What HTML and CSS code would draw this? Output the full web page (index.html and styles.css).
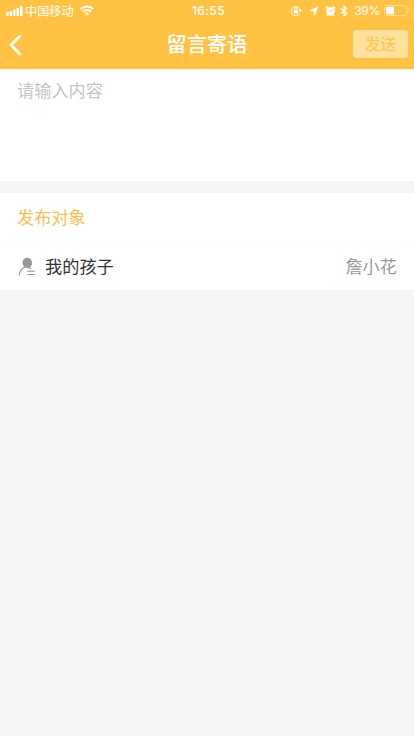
FILE: index.html
```html
<!DOCTYPE html>
<html lang="zh-CN">
<head>
<meta charset="utf-8">
<title>留言寄语</title>
<link rel="stylesheet" href="styles.css">
</head>
<body>
<header class="header">
  <div class="status">
    <div class="status-left">
      <svg class="signal" width="17" height="10" viewBox="0 0 17 10" fill="#fff"><rect x="0" y="6" width="2.6" height="4" rx=".8"/><rect x="3.5" y="5" width="2.6" height="5" rx=".8"/><rect x="7" y="3.6" width="2.6" height="6.4" rx=".8"/><rect x="10.5" y="2" width="2.6" height="8" rx=".8"/><rect x="14" y="0" width="2.6" height="10" rx=".8"/></svg>
      <span class="carrier">中国移动</span>
      <svg class="wifi" width="14" height="11" viewBox="0 0 14 11" fill="none" stroke="#fff" stroke-width="2"><path d="M.7 4.1C4.2.7 9.8.7 13.300 4.100"/><path d="M3 6.600C5.200 4.500 8.800 4.500 11 6.600"/><path d="M4.900 8.400C6.100 7.300 7.900 7.300 9.100 8.400L7 10.600Z" fill="#fff" stroke="none"/></svg>
    </div>
    <span class="time">16:55</span>
    <div class="status-right">
      <svg width="12" height="12" viewBox="0 0 12 12" fill="none" stroke="#fff"><path d="M9.700 8.700A4.600 4.600 0 1 1 10.400 5.500"/><path d="M8.700 5.200h3.300l-1.600 2.200z" fill="#fff" stroke="none"/><path d="M4.500 5.500V4.300a1.400 1.400 0 0 1 2.800 0v1.200" stroke-width=".9"/><rect x="3.700" y="5.300" width="4.400" height="3.300" rx=".4" fill="#fff" stroke="none"/></svg>
      <svg class="location" width="10" height="10" viewBox="0 0 10 10" fill="none" stroke="#fff" stroke-linejoin="round"><path d="M9 1 5.600 9 5 5 1 4.600Z" fill="#fff" stroke-width=".6"/></svg>
      <svg class="alarm" width="11" height="12" viewBox="0 0 11 12"><circle cx="5.500" cy="6.400" r="4.300" fill="#fff"/><path d="M1.100 3 2.700 1.700M9.900 3 8.300 1.700M2.800 9.800l-.6.900M8.200 9.800l.6.900" stroke="#fff" stroke-width="1.300" stroke-linecap="round"/><path d="M7.400 4.500 5.500 6.600 3.800 6" stroke="#ffc243" stroke-width=".9" fill="none"/></svg>
      <svg class="bluetooth" width="8" height="12" viewBox="0 0 8 12" fill="none" stroke="#fff" stroke-width="1.200"><path d="M.8 3.500 6.800 8.400 4 11V1l2.800 2.600L.8 8.500"/></svg>
      <span class="percent">39%</span>
      <svg class="battery" width="26" height="11" viewBox="0 0 26 11"><rect x=".5" y=".5" width="22.500" height="10" rx="2" fill="none" stroke="#ffdc92"/><rect x="2" y="1.700" width="8" height="7.600" rx=".7" fill="#fff"/><path d="M24 3.500c2 .6 2 3.400 0 4z" fill="#ffdc92"/></svg>
    </div>
  </div>
  <div class="navbar">
    <svg class="back" width="14" height="22" viewBox="0 0 14 22" fill="none" stroke="#fff" stroke-width="2.800" stroke-linecap="round" stroke-linejoin="round"><path d="M11 2 2 11l9 9"/></svg>
    <h1 class="title">留言寄语</h1>
    <div class="send">发送</div>
  </div>
</header>
<main>
  <section class="editor">请输入内容</section>
  <section class="target">
    <h2 class="target-title">发布对象</h2>
    <div class="row">
      <svg class="person" width="18" height="19" viewBox="0 0 18 19"><ellipse cx="9.300" cy="5.800" rx="4.800" ry="5.100" fill="#999"/><path d="M7.500 10h4l2.500 2.200-2.500-.4z" fill="#999"/><path d="M1.300 17.800C1.600 14.300 3.200 12 6.500 10.400M9.700 14.200h6.500M9.700 17.500h6.500" fill="none" stroke="#999" stroke-width="1.200" stroke-linecap="round"/></svg>
      <span class="label">我的孩子</span>
      <span class="name">詹小花</span>
    </div>
  </section>
</main>
</body>
</html>
```
FILE: styles.css
```css
* { box-sizing: border-box; }
body {
  margin: 0;
  min-height: 736px;
  background: #f5f5f5;
  color: #333;
  font-family: "Noto Sans CJK SC", sans-serif;
  font-size: 17.2px;
}
svg { display: block; flex: none; }
.header { height: 69px; background: #ffc243; color: #fff; }
.status {
  display: grid;
  grid-template-columns: 1fr auto 1fr;
  align-items: center;
  height: 20px;
  padding: 0 4px 0 6px;
  font-size: 12.2px;
  line-height: 20px;
}
.status-left, .status-right { display: flex; align-items: center; }
.status-right { justify-content: flex-end; }
.carrier { margin-left: 2px; }
.wifi { margin-left: 6px; }
.time, .percent { padding-top: 1px; font-family: Inter, "Liberation Sans", sans-serif; }
.time { padding-left: 1px; font-size: 12px; font-weight: 500; letter-spacing: .4px; }
.percent { margin-left: 6px; font-size: 12px; letter-spacing: -.3px; }
.location { margin-left: 7px; }
.alarm { margin-left: 6px; }
.bluetooth { margin-left: 4px; }
.battery { margin-left: 4px; }
.navbar {
  display: grid;
  grid-template-columns: 1fr auto 1fr;
  align-items: center;
  height: 48px;
  padding: 0 6px 0 9px;
}
.back { margin-top: 1px; }
.title { margin: 0 3px 0 0; font-size: 20.2px; font-weight: 500; line-height: 30px; }
.send {
  justify-self: end;
  width: 55px;
  height: 28px;
  border-radius: 3px;
  background: #ffe09c;
  color: #ffc64e;
  font-size: 16px;
  line-height: 27px;
  text-align: center;
}
.editor {
  height: 112px;
  padding: 8px 17px;
  background: #fff;
  color: #c5c5c5;
  line-height: 25px;
}
.target { margin-top: 12px; background: #fff; }
.target-title {
  height: 49px;
  margin: 0;
  padding-left: 17px;
  border-bottom: 1px solid #fbfbfb;
  color: #fbc04b;
  font-size: inherit;
  font-weight: 400;
  line-height: 48px;
}
.row { display: flex; align-items: center; height: 48px; padding: 0 17px 0 18px; line-height: 48px; }
.label { margin-left: 9px; }
.name { margin-left: auto; color: #999; }
```
